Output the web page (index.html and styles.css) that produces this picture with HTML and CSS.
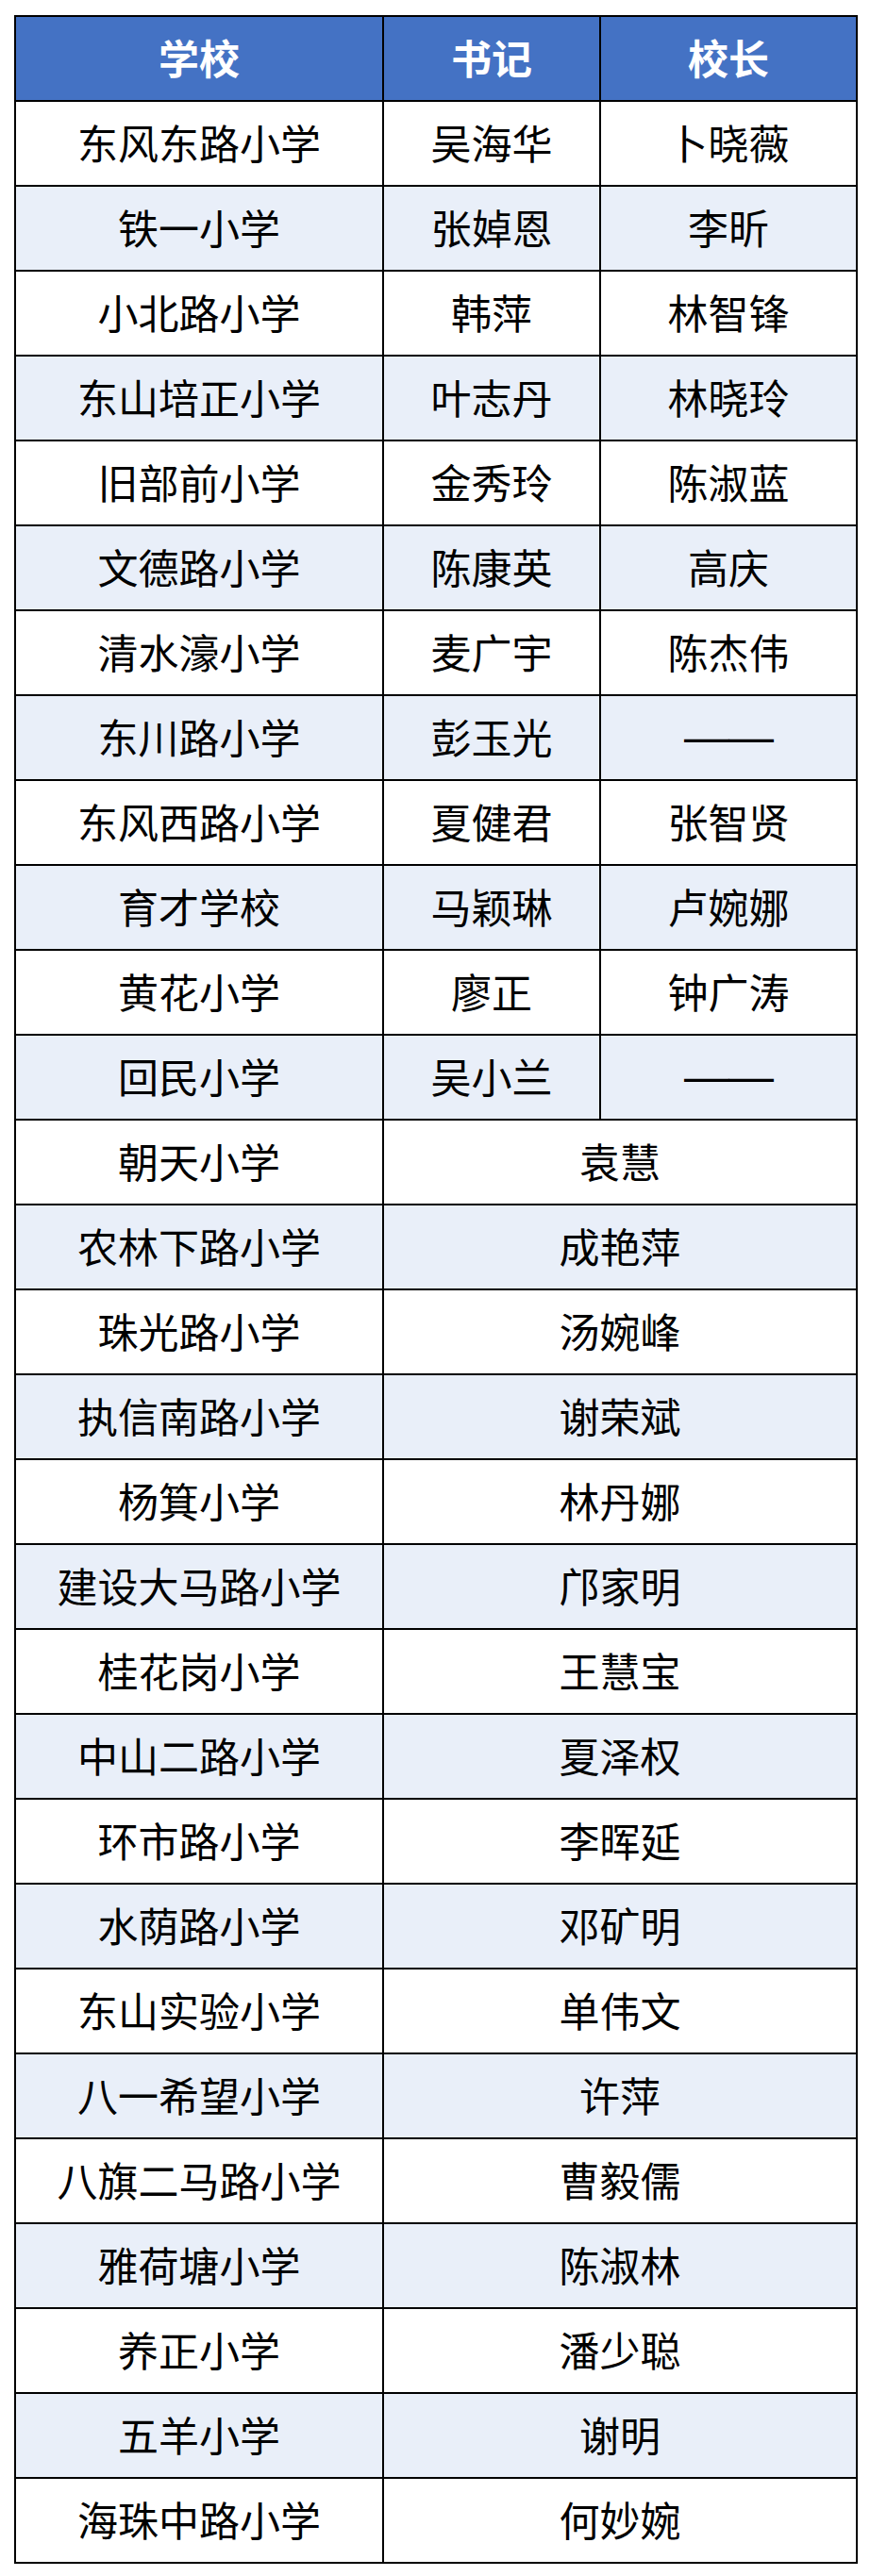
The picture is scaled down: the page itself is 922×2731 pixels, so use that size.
FILE: index.html
```html
<!DOCTYPE html>
<html lang="zh-CN">
<head>
<meta charset="utf-8">
<title>学校书记校长名单</title>
<link rel="stylesheet" href="styles.css">
</head>
<body>
<table class="roster">
  <colgroup>
    <col class="c-school">
    <col class="c-sec">
    <col class="c-head">
  </colgroup>
  <thead>
    <tr><th>学校</th><th>书记</th><th>校长</th></tr>
  </thead>
  <tbody>
    <tr><td>东风东路小学</td><td>吴海华</td><td>卜晓薇</td></tr>
    <tr class="alt"><td>铁一小学</td><td>张婥恩</td><td>李昕</td></tr>
    <tr><td>小北路小学</td><td>韩萍</td><td>林智锋</td></tr>
    <tr class="alt"><td>东山培正小学</td><td>叶志丹</td><td>林晓玲</td></tr>
    <tr><td>旧部前小学</td><td>金秀玲</td><td>陈淑蓝</td></tr>
    <tr class="alt"><td>文德路小学</td><td>陈康英</td><td>高庆</td></tr>
    <tr><td>清水濠小学</td><td>麦广宇</td><td>陈杰伟</td></tr>
    <tr class="alt"><td>东川路小学</td><td>彭玉光</td><td><span class="dash">——</span></td></tr>
    <tr><td>东风西路小学</td><td>夏健君</td><td>张智贤</td></tr>
    <tr class="alt"><td>育才学校</td><td>马颖琳</td><td>卢婉娜</td></tr>
    <tr><td>黄花小学</td><td>廖正</td><td>钟广涛</td></tr>
    <tr class="alt"><td>回民小学</td><td>吴小兰</td><td><span class="dash">——</span></td></tr>
    <tr><td>朝天小学</td><td colspan="2">袁慧</td></tr>
    <tr class="alt"><td>农林下路小学</td><td colspan="2">成艳萍</td></tr>
    <tr><td>珠光路小学</td><td colspan="2">汤婉峰</td></tr>
    <tr class="alt"><td>执信南路小学</td><td colspan="2">谢荣斌</td></tr>
    <tr><td>杨箕小学</td><td colspan="2">林丹娜</td></tr>
    <tr class="alt"><td>建设大马路小学</td><td colspan="2">邝家明</td></tr>
    <tr><td>桂花岗小学</td><td colspan="2">王慧宝</td></tr>
    <tr class="alt"><td>中山二路小学</td><td colspan="2">夏泽权</td></tr>
    <tr><td>环市路小学</td><td colspan="2">李晖延</td></tr>
    <tr class="alt"><td>水荫路小学</td><td colspan="2">邓矿明</td></tr>
    <tr><td>东山实验小学</td><td colspan="2">单伟文</td></tr>
    <tr class="alt"><td>八一希望小学</td><td colspan="2">许萍</td></tr>
    <tr><td>八旗二马路小学</td><td colspan="2">曹毅儒</td></tr>
    <tr class="alt"><td>雅荷塘小学</td><td colspan="2">陈淑林</td></tr>
    <tr><td>养正小学</td><td colspan="2">潘少聪</td></tr>
    <tr class="alt"><td>五羊小学</td><td colspan="2">谢明</td></tr>
    <tr><td>海珠中路小学</td><td colspan="2">何妙婉</td></tr>
  </tbody>
</table>
</body>
</html>
```
FILE: styles.css
```css
html, body {
  margin: 0;
  padding: 0;
  background: #ffffff;
}

body {
  font-family: "Noto Sans CJK SC", "Noto Sans", sans-serif;
  color: #000000;
}

.roster {
  border-collapse: collapse;
  table-layout: fixed;
  width: 892px;
  margin: 16px 0 0 15px;
  border: 2px solid #000;
}

.c-school { width: 390px; }
.c-sec { width: 230px; }
.c-head { width: 272px; }

.roster tr {
  height: 90px;
}

.roster th,
.roster td {
  border: 2px solid #000;
  padding: 0 0 4px 0;
  text-align: center;
  vertical-align: middle;
  font-size: 43px;
  line-height: 1;
  white-space: nowrap;
}

.roster th {
  background: #4472c4;
  color: #ffffff;
  font-weight: 700;
}

.roster td {
  font-weight: 400;
  background: #ffffff;
}

.roster tr.alt td {
  background: #e9eff9;
}

.dash {
  display: inline-block;
  font-family: "Liberation Sans", "DejaVu Sans", sans-serif;
  font-size: 48px;
  letter-spacing: -1px;
  line-height: 1;
  position: relative;
  top: 2px;
}
```
